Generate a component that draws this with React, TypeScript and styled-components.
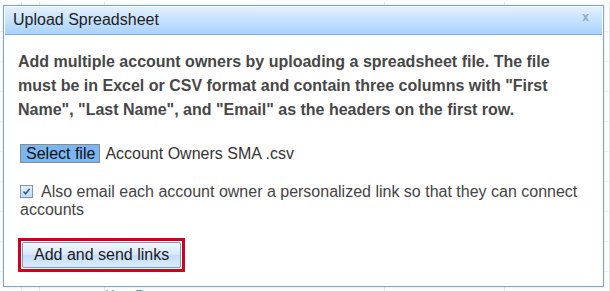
import React from 'react';
import styled, { createGlobalStyle } from 'styled-components';

const GlobalStyle = createGlobalStyle`
  html, body {
    margin: 0;
    padding: 0;
    background: #ffffff;
  }
  body {
    font-family: Arial, "Liberation Sans", sans-serif;
  }
`;

const Page = styled.div`
  position: relative;
  width: 610px;
  height: 291px;
  overflow: hidden;
  background: #fdfdfd;
`;

// faint table behind the modal
const Backdrop = styled.div`
  display: grid;
  grid-template-columns: 22px 18px 65px 280px 120px 105px;
  grid-auto-rows: 30px;
  padding-top: 2px;
`;

const BackCell = styled.div`
  border-right: 1px solid #e6e6e6;
  border-bottom: 1px solid #eeeeee;
  color: #7a8fb0;
  font-size: 15px;
  padding: 14px 0 0 0;
  white-space: nowrap;
`;

const Dialog = styled.div`
  position: absolute;
  left: 3px;
  top: 5px;
  width: 599px;
  height: 280px;
  background: #ffffff;
  border: 1px solid #79a7d0;
  box-shadow: 0 0 2px rgba(0, 0, 0, 0.12);
  display: flex;
  flex-direction: column;
`;

const Header = styled.div`
  height: 27px;
  margin: 1px;
  display: flex;
  align-items: center;
  justify-content: space-between;
  padding: 0 10px 0 8px;
  background: linear-gradient(to bottom, #e2f0ff 0%, #c3e0fd 55%, #a9d2fb 100%);
  border-bottom: 1px solid #7fb0dd;
`;

const Title = styled.div`
  font-size: 16px;
  color: #222222;
  padding-bottom: 1px;
`;

const Close = styled.div`
  font-size: 12px;
  font-weight: bold;
  color: #8ea6bd;
  align-self: flex-start;
  margin-top: 3px;
  margin-right: 3px;
`;

const Body = styled.div`
  padding: 14px 14px 0 14px;
  display: flex;
  flex-direction: column;
`;

const Intro = styled.p`
  margin: 0;
  font-size: 16px;
  font-weight: bold;
  line-height: 24px;
  color: #474747;
`;

const FileRow = styled.div`
  display: flex;
  align-items: center;
  gap: 5px;
  margin-top: 22px;
  margin-left: 2px;
`;

const SelectButton = styled.div`
  height: 17px;
  padding: 0 4px 0 5px;
  background: #7ab7f2;
  border: 1px solid #8a8a8a;
  font-size: 16px;
  line-height: 18px;
  color: #111111;
`;

const FileName = styled.span`
  font-size: 16px;
  color: #333333;
`;

const CheckRow = styled.label`
  display: block;
  margin-top: 20px;
  margin-left: 2px;
  font-size: 16px;
  line-height: 18px;
  color: #444444;
`;

const Box = styled.span`
  display: inline-block;
  width: 13px;
  height: 13px;
  margin-right: 8px;
  vertical-align: -1px;
  border: 1px solid #7a96b8;
  background: linear-gradient(to bottom, #e8f0fa, #c6d8ee);
  box-sizing: border-box;
  position: relative;
`;

const Tick = styled.svg`
  position: absolute;
  left: 1px;
  top: 1px;
`;

const Highlight = styled.div`
  align-self: flex-start;
  margin-top: 19px;
  margin-left: 0;
  border: 3px solid #d0021b;
  padding: 1px;
`;

const SendButton = styled.div`
  height: 24px;
  padding: 0 11px 0 11px;
  border: 1px solid #7f9db9;
  border-radius: 2px;
  background: linear-gradient(to bottom, #f2f8ff 0%, #d4e7fb 50%, #c2dcf8 51%, #dcebfb 100%);
  font-size: 16px;
  line-height: 24px;
  color: #1a1a1a;
`;

const rows = ['', '', '', '', '', '', '', '', '', ''];

export default function App() {
  return (
    <Page>
      <GlobalStyle />
      <Backdrop>
        {rows.map((_, i) => (
          <React.Fragment key={i}>
            <BackCell />
            <BackCell />
            <BackCell />
            <BackCell>{i === 9 ? 'Key Deen' : ''}</BackCell>
            <BackCell />
            <BackCell />
          </React.Fragment>
        ))}
      </Backdrop>
      <Dialog>
        <Header>
          <Title>Upload Spreadsheet</Title>
          <Close>x</Close>
        </Header>
        <Body>
          <Intro>
            Add multiple account owners by uploading a spreadsheet file. The file must be in Excel or
            CSV format and contain three columns with "First Name", "Last Name", and "Email" as the
            headers on the first row.
          </Intro>
          <FileRow>
            <SelectButton>Select file</SelectButton>
            <FileName>Account Owners SMA .csv</FileName>
          </FileRow>
          <CheckRow>
            <Box>
              <Tick width="9" height="9" viewBox="0 0 9 9">
                <path d="M1.5 4.5 L3.6 6.8 L7.6 1.8" fill="none" stroke="#2a5ea8" strokeWidth="1.6" />
              </Tick>
            </Box>
            Also email each account owner a personalized link so that they can connect accounts
          </CheckRow>
          <Highlight>
            <SendButton>Add and send links</SendButton>
          </Highlight>
        </Body>
      </Dialog>
    </Page>
  );
}
